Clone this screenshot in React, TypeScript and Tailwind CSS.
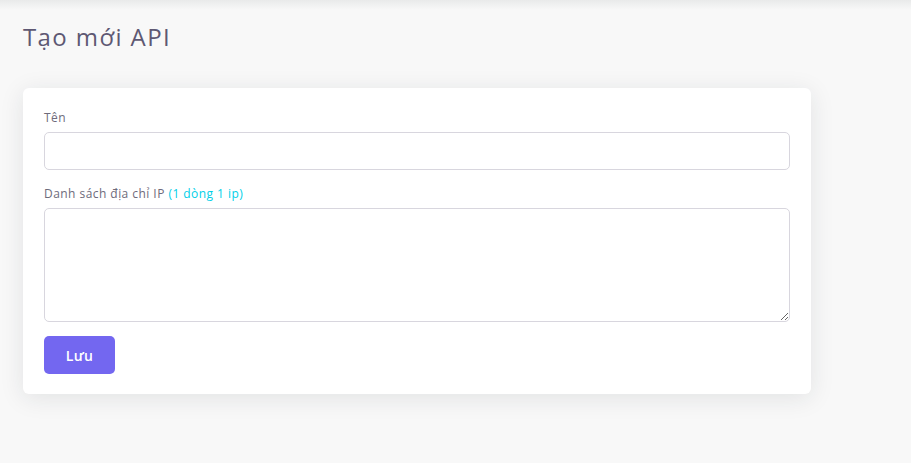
import React from "react";

const App = () => {
  return (
    <div className="min-h-[463px] bg-[#f8f8f8] font-['Open_Sans',sans-serif]">
      <div className="h-[10px] bg-gradient-to-b from-[#e9eaea] to-[#f8f8f8]" />
      <div className="px-[23px]">
        <h2 className="mt-[11px] text-[24px] leading-[32px] font-normal tracking-[1.4px] text-[#5e5873]">
          Tạo mới API
        </h2>
        <div className="mt-[35px] w-[788px] rounded-[6px] bg-white px-[21px] pt-[22px] pb-[20px] shadow-[0_4px_24px_0_rgba(34,41,47,0.1)]">
          <label className="block text-[12px] leading-[16px] tracking-[0.45px] text-[#6e6b7b]">Tên</label>
          <input
            type="text"
            className="mt-[6px] block h-[38px] w-full rounded-[5px] border border-[#d8d6de] bg-white px-3 outline-none"
          />
          <label className="mt-[16px] block text-[12px] leading-[16px] tracking-[0.45px] text-[#6e6b7b]">
            Danh sách địa chỉ IP <span className="text-[#00cfe8]">(1 dòng 1 ip)</span>
          </label>
          <textarea
            className="mt-[6px] block h-[114px] w-full rounded-[5px] border border-[#d8d6de] bg-white px-3 py-2 outline-none"
          />
          <button className="mt-[14px] flex h-[38px] w-[71px] items-center justify-center rounded-[5px] bg-[#7367f0] text-[14px] font-semibold tracking-[0.3px] text-white">
            Lưu
          </button>
        </div>
      </div>
    </div>
  );
};

export default App;
